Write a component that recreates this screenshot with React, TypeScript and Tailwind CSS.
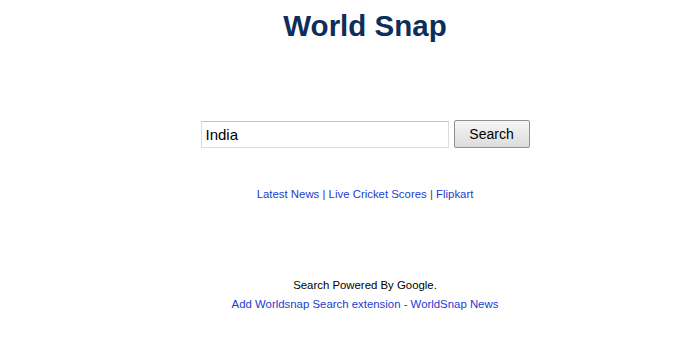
export default function App() {
  return (
    <div className="w-[700px] h-[361px] bg-white pl-[30px] flex flex-col items-center font-['Liberation_Sans',Arial,sans-serif]">
      <h1 className="mt-[8px] text-[29.5px] leading-[36px] font-bold text-[#0d2e5a]">World Snap</h1>
      <div className="mt-[76px] flex items-center gap-[5px]">
        <input
          defaultValue="India"
          className="w-[248px] h-[27px] border border-[#dcdcdc] border-t-[#c4c4c4] px-[4px] text-[15px] text-black outline-none"
        />
        <button className="w-[76px] h-[28px] border border-[#8f8f8f] rounded-[2px] bg-gradient-to-b from-[#f6f6f6] to-[#dcdcdc] text-[14px] text-black">
          Search
        </button>
      </div>
      <div className="mt-[38px] text-[11.4px] text-[#444]">
        <a className="text-[#1a3ccc]">Latest News</a> | <a className="text-[#1a3ccc]">Live Cricket Scores</a> | <a className="text-[#1a3ccc]">Flipkart</a>
      </div>
      <div className="mt-[74px] text-[11.4px] text-black">Search Powered By Google.</div>
      <div className="mt-[2px] text-[11.4px] text-[#1a3ccc]">Add Worldsnap Search extension - WorldSnap News</div>
    </div>
  );
}
